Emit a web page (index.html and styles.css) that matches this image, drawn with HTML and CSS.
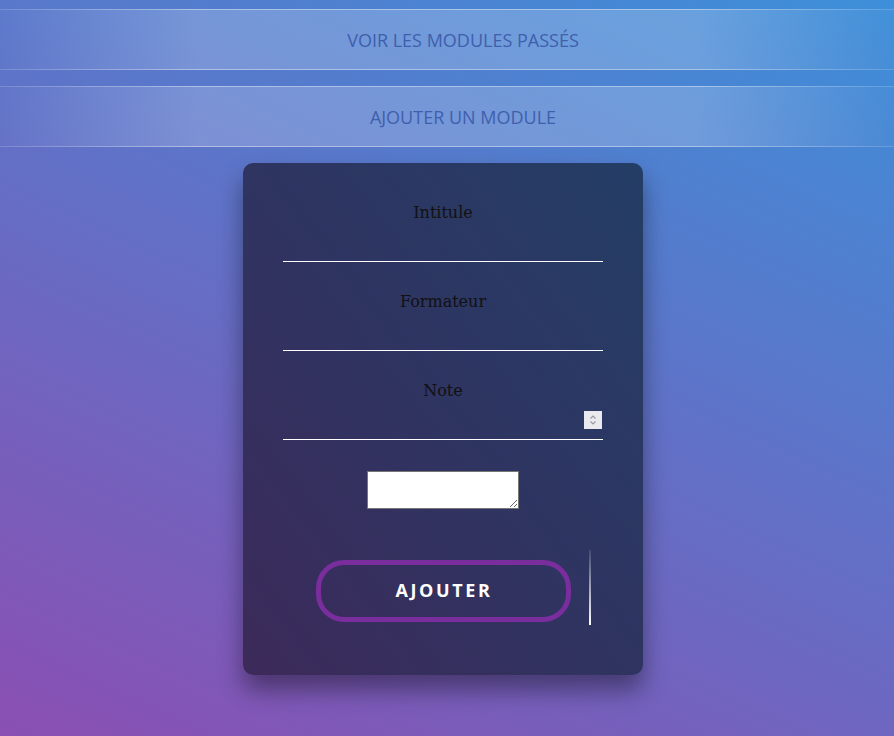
FILE: index.html
```html
<!DOCTYPE html>
<html lang="fr">
<head>
<meta charset="utf-8">
<title>Modules</title>
<link rel="stylesheet" href="styles.css">
</head>
<body>
<nav class="nav">
  <a class="nav-item" href="#">Voir les modules passés</a>
  <a class="nav-item" href="#">Ajouter un module</a>
</nav>
<main class="main">
  <form class="card">
    <div class="field">
      <label class="field-label" for="intitule">Intitule</label>
      <input class="field-input" id="intitule" type="text">
    </div>
    <div class="field">
      <label class="field-label" for="formateur">Formateur</label>
      <input class="field-input" id="formateur" type="text">
    </div>
    <div class="field">
      <label class="field-label" for="note">Note</label>
      <div class="input-wrap">
        <input class="field-input" id="note" type="number">
        <span class="spin" aria-hidden="true">
          <svg width="18" height="18" viewBox="0 0 18 18">
            <path d="M6.5 7.5 L9 5 L11.5 7.5" fill="none" stroke="#9a9aa0" stroke-width="1.2"/>
            <path d="M6.5 10.5 L9 13 L11.5 10.5" fill="none" stroke="#9a9aa0" stroke-width="1.2"/>
          </svg>
        </span>
      </div>
    </div>
    <div class="area-row">
      <textarea class="area"></textarea>
    </div>
    <div class="btn-row">
      <div class="btn-wrap">
        <button class="btn" type="button">Ajouter</button>
        <span class="btn-line"></span>
      </div>
    </div>
  </form>
</main>
</body>
</html>
```
FILE: styles.css
```css
html, body {
  height: 100%;
}
body {
  margin: 0;
  min-height: 736px;
  background: linear-gradient(25deg, #8a4fb2 0%, #3d8fd9 100%);
  font-family: "Open Sans", "Liberation Sans", sans-serif;
  overflow: hidden;
}
.nav {
  display: flex;
  flex-direction: column;
  gap: 16px;
  padding-top: 9px;
}
.nav-item {
  position: relative;
  display: flex;
  align-items: center;
  justify-content: center;
  height: 61px;
  box-sizing: border-box;
  padding-left: 32px;
  text-transform: uppercase;
  text-decoration: none;
  font-size: 18px;
  color: #3f5fad;
  background: linear-gradient(90deg, rgba(255,255,255,0.02) 0%, rgba(255,255,255,0.2) 22%, rgba(255,255,255,0.2) 78%, rgba(255,255,255,0.02) 100%);
}
.nav-item::before,
.nav-item::after {
  content: "";
  position: absolute;
  left: 0;
  right: 0;
  height: 1px;
  background: linear-gradient(90deg, rgba(255,255,255,0.15) 0%, rgba(255,255,255,0.4) 22%, rgba(255,255,255,0.4) 78%, rgba(255,255,255,0.15) 100%);
}
.nav-item::before { top: 0; }
.nav-item::after { bottom: 0; }

.main {
  display: flex;
  justify-content: center;
  padding-top: 16px;
  padding-right: 8px;
}
.card {
  width: 400px;
  height: 512px;
  box-sizing: border-box;
  padding: 40px 40px 0;
  border-radius: 10px;
  background: linear-gradient(to bottom left, #243e66 0%, #2f3461 50%, #3c2a5a 100%);
  box-shadow: 0 15px 25px rgba(0, 0, 0, 0.4);
  display: flex;
  flex-direction: column;
}
.field {
  display: flex;
  flex-direction: column;
  margin-bottom: 30px;
}
.field-label {
  font-family: "DejaVu Serif", serif;
  font-size: 16px;
  line-height: 19px;
  color: #111;
  text-align: center;
}
.input-wrap {
  position: relative;
  display: flex;
  flex-direction: column;
}
.field-input {
  height: 40px;
  box-sizing: border-box;
  margin: 0;
  padding: 0;
  border: none;
  border-bottom: 1px solid #fff;
  background: transparent;
  color: #fff;
  font-size: 16px;
  outline: none;
  -moz-appearance: textfield;
}
.field-input::-webkit-inner-spin-button,
.field-input::-webkit-outer-spin-button {
  -webkit-appearance: none;
  margin: 0;
}
.spin {
  position: absolute;
  right: 1px;
  top: 11px;
  width: 18px;
  height: 18px;
  background: #e9e9ee;
  display: block;
}
.spin svg {
  display: block;
}
.area-row {
  display: flex;
  justify-content: center;
  margin-top: 1px;
}
.area {
  width: 152px;
  height: 38px;
  box-sizing: border-box;
  margin: 0;
  border: 1px solid #767676;
  background: #fff;
}
.btn-row {
  display: flex;
  justify-content: center;
  margin-top: 51px;
}
.btn-wrap {
  position: relative;
}
.btn {
  width: 255px;
  height: 62px;
  box-sizing: border-box;
  border: 5px solid #7a2e9e;
  border-radius: 28px;
  background: transparent;
  color: #fff;
  font-family: "Open Sans", sans-serif;
  font-weight: 700;
  font-size: 18px;
  letter-spacing: 2.6px;
  text-transform: uppercase;
  padding: 0 0 2px 2px;
  cursor: pointer;
}
.btn-line {
  position: absolute;
  left: 273px;
  top: -10px;
  width: 2px;
  height: 75px;
  background: linear-gradient(to bottom, rgba(255,255,255,0.1), #fff);
}
```
